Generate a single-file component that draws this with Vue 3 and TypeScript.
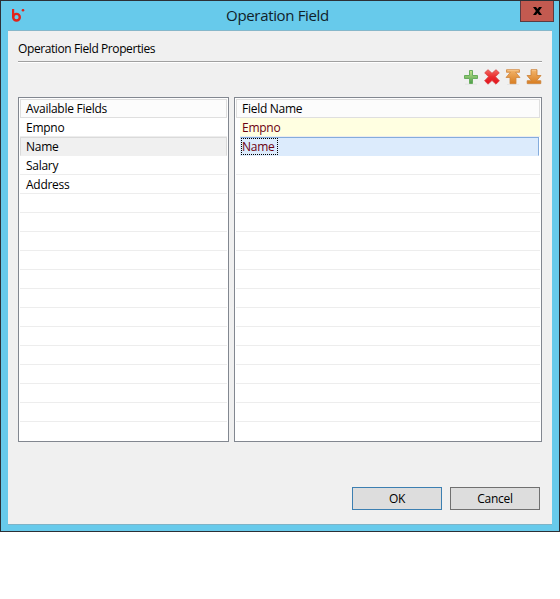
<script setup lang="ts">
import { ref } from 'vue'

interface Row { label: string; state: string }

const blank = (n: number): Row[] => Array.from({ length: n }, () => ({ label: '', state: '' }))

const available = ref<Row[]>([
  { label: 'Empno', state: '' },
  { label: 'Name', state: 'inactive' },
  { label: 'Salary', state: '' },
  { label: 'Address', state: '' },
  ...blank(12),
])
const chosen = ref<Row[]>([
  { label: 'Empno', state: 'changed' },
  { label: 'Name', state: 'selected' },
  ...blank(14),
])
</script>

<template>
  <div class="window">
    <header class="titlebar">
      <svg class="logo" width="14" height="14" viewBox="0 0 14 14">
        <path d="M2.1 0V8.4" fill="none" stroke="#e2231a" stroke-width="2.2" />
        <circle cx="5.5" cy="8.2" r="3.3" fill="none" stroke="#e2231a" stroke-width="2.4" />
        <circle cx="12" cy="1.2" r="1.3" fill="#e2231a" />
      </svg>
      <h1 class="title">Operation Field</h1>
      <button class="close" aria-label="Close">
        <svg width="9" height="8" viewBox="0 0 9 8">
          <path d="M0 0H3L4.5 2L6 0H9L6.1 4L9 8H6L4.5 6L3 8H0L2.9 4Z" fill="#000" />
        </svg>
      </button>
    </header>

    <main class="body">
      <h2 class="heading">Operation Field Properties</h2>
      <div class="toolbar">
        <svg width="16" height="16" viewBox="0 0 16 16">
          <defs>
            <linearGradient id="green" x1="0" y1="0" x2="0" y2="1"><stop offset="0" stop-color="#c4e58c" /><stop offset="1" stop-color="#4a9c4a" /></linearGradient>
            <linearGradient id="red" x1="0" y1="0" x2="0" y2="1"><stop offset="0" stop-color="#f46b62" /><stop offset=".5" stop-color="#e92b2d" /><stop offset="1" stop-color="#e3141e" /></linearGradient>
            <linearGradient id="orange" x1="0" y1="0" x2="0" y2="1"><stop offset="0" stop-color="#f3b56c" /><stop offset="1" stop-color="#d87d20" /></linearGradient>
          </defs>
          <path d="M2 15.2H14" stroke="#e2e2e2" />
          <path d="M6.5 1.5H9.5V6.5H14.5V9.5H9.5V14.5H6.5V9.5H1.5V6.5H6.5Z" fill="url(#green)" stroke="#68ad5c" stroke-linejoin="round" />
        </svg>
        <svg width="16" height="16" viewBox="0 0 16 16">
          <path d="M4 .7L8 4.3L12 .7L15.3 3.8L11.5 7.7L15.4 11.8L12 15.2L8 11.5L4 15.2L.6 11.8L4.5 7.7L.7 3.8Z" fill="url(#red)" stroke="#d94343" stroke-width=".8" stroke-linejoin="round" />
        </svg>
        <svg width="16" height="16" viewBox="0 0 16 16">
          <path d="M1.5 .7H14.5V3.3H10.6L15 8.5H11V14.8H5V8.5H1L5.4 3.3H1.5Z" fill="url(#orange)" stroke="#cf853d" stroke-width=".8" stroke-linejoin="round" />
          <path d="M2.5 1.6H13.5" stroke="#f9cd96" stroke-width=".7" />
          <path d="M2 15.6H14" stroke="#dedede" stroke-width=".7" />
        </svg>
        <svg width="16" height="16" viewBox="0 0 16 16">
          <path d="M5 .7H11V6.5H15L10.6 11.7H14.8V14.6H1.2V11.7H5.4L1 6.5H5Z" fill="url(#orange)" stroke="#c97f35" stroke-width=".8" stroke-linejoin="round" />
          <path d="M5.8 1.6H10.2" stroke="#f9cd96" stroke-width=".7" />
          <path d="M2 15.6H14" stroke="#dedede" stroke-width=".7" />
        </svg>
      </div>

      <div class="tables">
        <section class="table">
          <div class="head">Available Fields</div>
          <div v-for="(row, i) in available" :key="i" class="row" :class="row.state"><span class="cell">{{ row.label }}</span></div>
        </section>
        <section class="table">
          <div class="head">Field Name</div>
          <div v-for="(row, i) in chosen" :key="i" class="row" :class="row.state"><span class="cell">{{ row.label }}</span></div>
        </section>
      </div>

      <footer class="actions">
        <button class="btn primary">OK</button>
        <button class="btn">Cancel</button>
      </footer>
    </main>
  </div>
</template>

<style>
body { background: #fff; }
</style>

<style scoped>
* { box-sizing: border-box; }
.window {
  width: 560px;
  height: 532px;
  border: 1px solid #2c3036;
  background: #67caeb;
  padding: 0 7px;
  font: 12px/18px "Open Sans", "Noto Sans", sans-serif;
  letter-spacing: -0.27px;
  color: #000;
}
.titlebar {
  height: 29px;
  display: grid;
  grid-template-columns: 34px 1fr 34px;
  margin-right: -2px;
}
.logo { margin: 8px 0 0 3px; }
.title {
  margin: 0;
  padding: 0 7px 0 0;
  text-align: center;
  font-size: 15px;
  font-weight: 400;
  line-height: 29px;
  letter-spacing: -0.34px;
  color: #10222a;
}
.close {
  width: 34px;
  height: 21px;
  border: 1px solid #5b3b42;
  border-top: 0;
  padding: 0 0 1px;
  background: #c35a50;
  display: flex;
  align-items: center;
  justify-content: center;
}
.body {
  width: 544px;
  height: 495px;
  background: #f0f0f0;
  border-top: 1px solid #86b7ca;
  border-bottom: 1px solid #7eb3c7;
  padding: 0 10px;
}
.heading {
  margin: 0;
  height: 32px;
  padding-top: 9px;
  font-size: 12px;
  font-weight: 400;
  letter-spacing: -0.4px;
  border-bottom: 1px solid #fff;
  box-shadow: inset 0 -1px #a0a0a0;
  white-space: nowrap;
}
.toolbar {
  height: 34px;
  display: flex;
  justify-content: flex-end;
  gap: 5px;
  padding-top: 6px;
}
.tables {
  display: grid;
  grid-template-columns: 211px 308px;
  gap: 5px;
}
.table {
  height: 345px;
  border: 1px solid #828790;
  background: #fff;
  padding: 1px;
  overflow: hidden;
}
.head {
  height: 19px;
  border: 1px solid #dfdfdf;
  background: #fcfcfc;
  padding-left: 5px;
  line-height: 18px;
}
.row {
  height: 19px;
  border-bottom: 1px solid #ededed;
  padding-left: 6px;
  line-height: 19px;
  white-space: nowrap;
}
.row.inactive {
  background: #f0f0f0;
  border: 1px solid #dadada;
  border-bottom-color: #f0f0f0;
  padding-left: 5px;
  line-height: 17px;
}
.row.changed {
  margin-left: 4px;
  padding-left: 2px;
  background: #ffffe1;
  color: #6b0010;
}
.row.selected {
  margin: 0 1px 0 4px;
  padding: 0;
  background: #dcebfc;
  border: 1px solid #84acdd;
  border-left-color: #dcebfc;
  border-bottom-color: #dcebfc;
  color: #6b0010;
}
.row.selected .cell {
  display: block;
  width: 37px;
  height: 17px;
  border: 1px dotted #000;
  line-height: 15px;
}
.actions {
  display: flex;
  justify-content: flex-end;
  gap: 8px;
  padding: 45px 2px 0 0;
}
.btn {
  width: 90px;
  height: 23px;
  border: 1px solid #707070;
  background: #ddd;
  padding: 0;
  font: inherit;
  letter-spacing: inherit;
  color: #000;
  line-height: 21px;
}
.btn.primary { border-color: #3c7fb1; }
</style>
